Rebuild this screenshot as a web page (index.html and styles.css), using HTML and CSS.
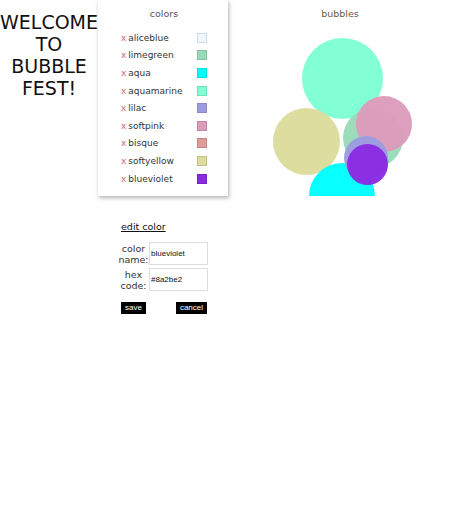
FILE: index.html
```html
<!DOCTYPE html>
<html>
<head>
<meta charset="utf-8">
<link rel="stylesheet" href="styles.css">
</head>
<body>
<div class="top">
  <h1 class="welcome">WELCOME TO BUBBLE FEST!</h1>
  <div class="colors">
    <div class="title">colors</div>
    <ul class="list">
      <li class="item"><span class="name"><span class="x">x</span>aliceblue</span><span class="swatch" style="background:#f0f8ff"></span></li>
      <li class="item"><span class="name"><span class="x">x</span>limegreen</span><span class="swatch" style="background:#99dbb9"></span></li>
      <li class="item"><span class="name"><span class="x">x</span>aqua</span><span class="swatch" style="background:#00ffff"></span></li>
      <li class="item"><span class="name"><span class="x">x</span>aquamarine</span><span class="swatch" style="background:#7fffd4"></span></li>
      <li class="item"><span class="name"><span class="x">x</span>lilac</span><span class="swatch" style="background:#9c9ce0"></span></li>
      <li class="item"><span class="name"><span class="x">x</span>softpink</span><span class="swatch" style="background:#dc9cbc"></span></li>
      <li class="item"><span class="name"><span class="x">x</span>bisque</span><span class="swatch" style="background:#e09c98"></span></li>
      <li class="item"><span class="name"><span class="x">x</span>softyellow</span><span class="swatch" style="background:#dcdc9c"></span></li>
      <li class="item"><span class="name"><span class="x">x</span>blueviolet</span><span class="swatch" style="background:#8a2be2"></span></li>
    </ul>
  </div>
  <div class="bubbles">
    <div class="title">bubbles</div>
    <div class="canvas">
      <span class="bubble" style="left:74px;top:38px;width:81px;height:81px;background:#7fffd4"></span>
      <span class="bubble" style="left:115px;top:108px;width:60px;height:60px;background:#99dbb9"></span>
      <span class="bubble" style="left:45px;top:108px;width:67px;height:67px;background:#dcdc9c"></span>
      <span class="bubble" style="left:81px;top:163px;width:66px;height:66px;background:#00ffff"></span>
      <span class="bubble" style="left:128px;top:96px;width:56px;height:56px;background:#dc9cbc"></span>
      <span class="bubble" style="left:116px;top:136px;width:44px;height:44px;background:#9c9ce0"></span>
      <span class="bubble" style="left:119px;top:144px;width:41px;height:41px;background:#8a2be2"></span>
    </div>
  </div>
</div>
<div class="edit">
  <div class="edit-title">edit color</div>
  <div class="row">
    <label class="label">color name:</label>
    <input class="input" type="text" value="blueviolet">
  </div>
  <div class="row">
    <label class="label">hex code:</label>
    <input class="input" type="text" value="#8a2be2">
  </div>
  <div class="buttons">
    <button class="btn">save</button>
    <button class="btn">cancel</button>
  </div>
</div>
</body>
</html>
```
FILE: styles.css
```css
* { box-sizing: border-box; }
body {
  margin: 0;
  font-family: "DejaVu Sans", "Noto Sans", sans-serif;
  color: #222;
  background: #fff;
}
.top {
  display: flex;
  height: 196px;
}
.welcome {
  width: 98px;
  margin: 0;
  padding-top: 11px;
  font-size: 19px;
  line-height: 22px;
  font-weight: normal;
  text-align: center;
  color: #111;
}
.colors {
  width: 130px;
  height: 196px;
  box-shadow: 1px 2px 4px rgba(0,0,0,0.3);
  padding: 8px 21px 0 23px;
}
.title {
  font-size: 9.5px;
  text-align: center;
  color: #555;
  line-height: 12px;
}
.list {
  list-style: none;
  margin: 9px 0 0;
  padding: 0;
}
.item {
  display: flex;
  justify-content: space-between;
  align-items: center;
  height: 17.6px;
  font-size: 9px;
  color: #333;
}
.x {
  color: #d96b6b;
  margin-right: 2px;
}
.swatch {
  width: 10px;
  height: 10px;
  border: 1px solid rgba(0,0,0,0.12);
}
.bubbles {
  flex: 1;
  padding-top: 8px;
  position: relative;
  overflow: hidden;
}
.bubbles .title { color: #6b5a3c; }
.canvas {
  position: absolute;
  inset: 0;
}
.bubble {
  position: absolute;
  border-radius: 50%;
  opacity: 0.97;
}
.edit {
  margin-left: 118px;
  width: 90px;
  padding-top: 25px;
}
.edit-title {
  margin-left: 3px;
  font-size: 9.5px;
  text-decoration: underline;
  color: #111;
  margin-bottom: 10px;
}
.row {
  display: flex;
  align-items: center;
  margin-bottom: 3px;
}
.label {
  width: 31px;
  font-size: 9.5px;
  line-height: 11px;
  text-align: center;
  color: #333;
}
.input {
  width: 59px;
  height: 23px;
  border: 1px solid #ddd;
  padding: 0 1px;
  font-family: "Liberation Sans", Arial, sans-serif;
  font-size: 8px;
  color: #111;
}
.buttons {
  display: flex;
  justify-content: space-between;
  margin-top: 11px;
  padding-left: 3px;
  padding-right: 1px;
}
.btn {
  background: #000;
  color: #fff;
  border: 1px solid #000;
  font-family: "Liberation Sans", Arial, sans-serif;
  font-size: 8px;
  height: 12px;
  padding: 0 3px;
  line-height: 10px;
}
```
